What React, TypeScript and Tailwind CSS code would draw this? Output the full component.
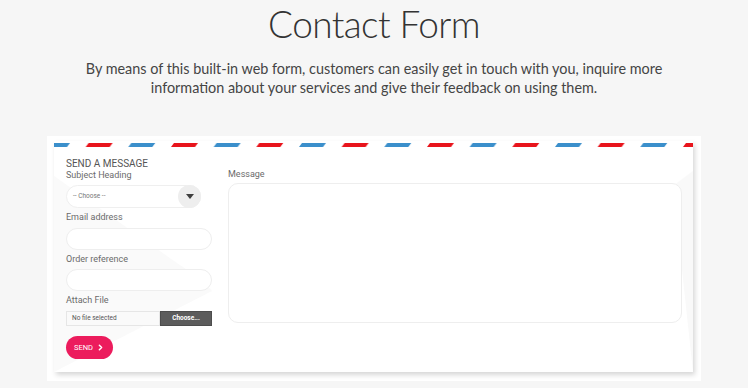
import { ChevronRight } from "lucide-react";

const Label = ({ children }: { children: React.ReactNode }) => (
  <label className="block text-[9px] leading-[11px] text-[#6b6b6b]">{children}</label>
);

const Stripes = () => (
  <svg className="block h-[4px] w-full" viewBox="0 0 639 4" preserveAspectRatio="none">
    <defs>
      <pattern id="airmail" x="-11" y="0" width="85.33" height="4" patternUnits="userSpaceOnUse">
        <polygon points="3,0 27,0 24,4 0,4" fill="#3b8fcb" />
        <polygon points="45.67,0 69.67,0 66.67,4 42.67,4" fill="#e8141c" />
      </pattern>
    </defs>
    <rect x="0" y="0" width="639" height="4" fill="url(#airmail)" />
  </svg>
);

export default function App() {
  return (
    <div className="min-h-screen bg-[#f6f6f6] pt-[1px] font-['Lato',sans-serif]">
      <h1 className="text-center text-[37px] font-light leading-[46px] tracking-[-0.6px] text-[#333]">Contact Form</h1>
      <p className="mt-[12px] text-center text-[14.4px] leading-[19px] text-[#454545]">
        By means of this built-in web form, customers can easily get in touch with you, inquire more
        <br />
        information about your services and give their feedback on using them.
      </p>

      <div className="mx-auto mt-[39px] w-[654px] bg-white pb-[9px] pl-[7px] pr-[8px] pt-[5px]">
        <div className="relative h-[231px] overflow-hidden bg-white shadow-[2px_3px_5px_rgba(0,0,0,0.16)]">
          <svg className="absolute inset-0 h-full w-full" viewBox="0 0 639 231" preserveAspectRatio="none">
            <path d="M0 35 L120 120 C135 130 150 140 158 150 L0 231 Z" fill="#fafafa" />
            <path d="M639 30 L619 45 L639 231 Z" fill="#f9f9f9" />
          </svg>
          <div className="relative pt-[2px]">
            <Stripes />
          </div>
          <div className="relative flex gap-[16px] pl-[12px] pr-[11px] pt-[10px] font-['Roboto',sans-serif]">
            <div className="w-[146px]">
              <div className="text-[10px] uppercase leading-[13px] text-[#555]">Send a message</div>
              <Label>Subject Heading</Label>
              <div className="mt-[4px] flex h-[23px] w-[135px] items-center justify-between rounded-full border border-[#efefef] bg-white pl-[6px]">
                <span className="text-[6.5px] text-[#777]">-- Choose --</span>
                <span className="flex h-[23px] w-[23px] items-center justify-center rounded-full bg-[#eeeeee] -mr-px">
                  <svg width="8" height="5" viewBox="0 0 8 5">
                    <polygon points="0,0 8,0 4,5" fill="#3f3f3f" />
                  </svg>
                </span>
              </div>
              <div className="mt-[4px]">
                <Label>Email address</Label>
              </div>
              <div className="mt-[5px] h-[22px] rounded-full border border-[#eeeeee] bg-white" />
              <div className="mt-[4px]">
                <Label>Order reference</Label>
              </div>
              <div className="mt-[4px] h-[22px] rounded-full border border-[#eeeeee] bg-white" />
              <div className="mt-[4px]">
                <Label>Attach File</Label>
              </div>
              <div className="mt-[5px] flex h-[15px]">
                <div className="flex flex-1 items-center border border-[#e6e6e6] bg-[#fafafa] pl-[5px] text-[6.5px] text-[#555]">
                  No file selected
                </div>
                <div className="flex w-[52px] items-center justify-center border border-[#4d4d4d] bg-[#5c5c5c] text-[6.5px] font-bold text-white">
                  Choose...
                </div>
              </div>
              <button className="mt-[10px] flex h-[23px] w-[47px] items-center justify-center gap-[3px] rounded-full bg-[#ec1c5d] text-[7.5px] text-white">
                SEND
                <ChevronRight size={9} strokeWidth={4} />
              </button>
            </div>
            <div className="flex-1 pt-[12px]">
              <Label>Message</Label>
              <div className="mt-[3px] h-[140px] rounded-[10px] border border-[#eeeeee] bg-white" />
            </div>
          </div>
        </div>
      </div>
    </div>
  );
}
